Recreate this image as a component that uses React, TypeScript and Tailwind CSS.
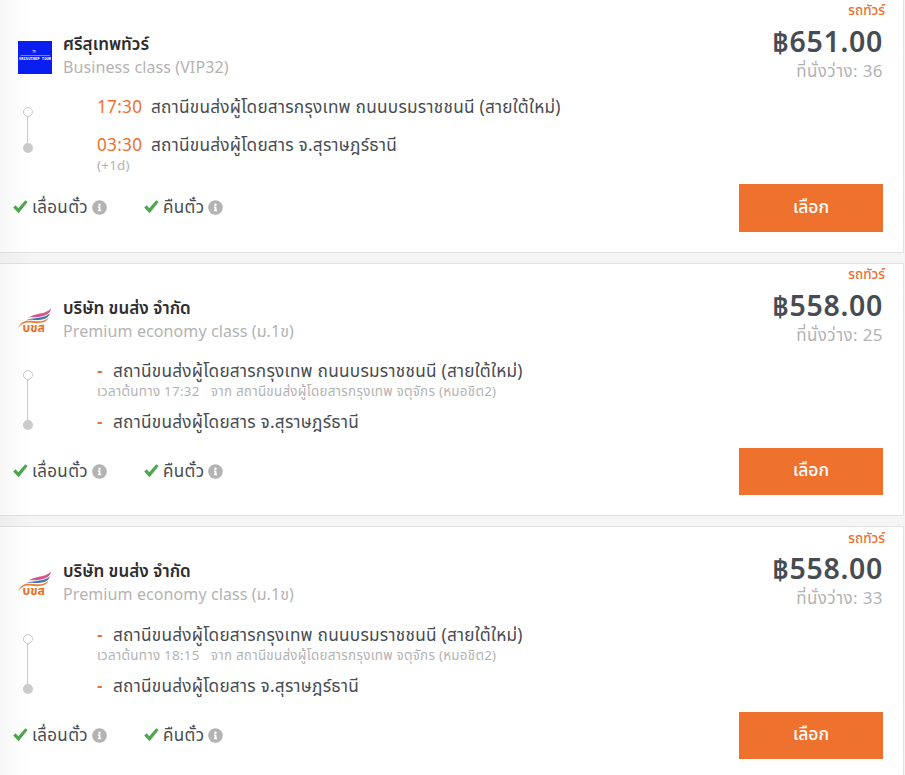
import React from 'react';
import { FaInfoCircle } from 'react-icons/fa';

interface Stop {
  time: string;
  name: string;
  note?: string;
}

interface Trip {
  id: number;
  operator: string;
  logo: 'srisuthep' | 'transport';
  seatClass: string;
  price: string;
  seats: number;
  stops: Stop[];
}

const trips: Trip[] = [
  {
    id: 1,
    operator: 'ศรีสุเทพทัวร์',
    logo: 'srisuthep',
    seatClass: 'Business class (VIP32)',
    price: '651.00',
    seats: 36,
    stops: [
      { time: '17:30', name: 'สถานีขนส่งผู้โดยสารกรุงเทพ ถนนบรมราชชนนี (สายใต้ใหม่)' },
      { time: '03:30', name: 'สถานีขนส่งผู้โดยสาร จ.สุราษฎร์ธานี', note: '(+1d)' },
    ],
  },
  {
    id: 2,
    operator: 'บริษัท ขนส่ง จำกัด',
    logo: 'transport',
    seatClass: 'Premium economy class (ม.1ข)',
    price: '558.00',
    seats: 25,
    stops: [
      {
        time: '-',
        name: 'สถานีขนส่งผู้โดยสารกรุงเทพ ถนนบรมราชชนนี (สายใต้ใหม่)',
        note: 'เวลาต้นทาง 17:32 \u00a0 จาก สถานีขนส่งผู้โดยสารกรุงเทพ จตุจักร (หมอชิต2)',
      },
      { time: '-', name: 'สถานีขนส่งผู้โดยสาร จ.สุราษฎร์ธานี' },
    ],
  },
  {
    id: 3,
    operator: 'บริษัท ขนส่ง จำกัด',
    logo: 'transport',
    seatClass: 'Premium economy class (ม.1ข)',
    price: '558.00',
    seats: 33,
    stops: [
      {
        time: '-',
        name: 'สถานีขนส่งผู้โดยสารกรุงเทพ ถนนบรมราชชนนี (สายใต้ใหม่)',
        note: 'เวลาต้นทาง 18:15 \u00a0 จาก สถานีขนส่งผู้โดยสารกรุงเทพ จตุจักร (หมอชิต2)',
      },
      { time: '-', name: 'สถานีขนส่งผู้โดยสาร จ.สุราษฎร์ธานี' },
    ],
  },
];

const OperatorLogo: React.FC<{ kind: Trip['logo'] }> = ({ kind }) => {
  if (kind === 'srisuthep') {
    return (
      <svg width="34" height="33" viewBox="0 0 34 33" className="mt-[8px] shrink-0">
        <rect width="34" height="33" fill="#0a1ef0" />
        <path d="M14.500 9.500h3M15 11.500l1-1.200 1 1.200 1-1.200" stroke="#c8ccff" strokeWidth="0.800" fill="none" />
        <path d="M2.500 14.500h29.500" stroke="#8f98ff" strokeWidth="0.800" />
        <text x="1" y="19" fontSize="4" fontWeight="700" fill="#ffffff" textLength="32" lengthAdjust="spacingAndGlyphs" fontFamily="DejaVu Sans Mono, monospace">
          SRISUTHEP TOUR
        </text>
      </svg>
    );
  }
  return (
    <svg width="34" height="33" viewBox="0 0 34 33" className="mt-[8px] shrink-0">
      <path d="M11 12.500C17 7.500 27 10 33 3.500 32 10 26 12 20 12.300 16.500 12.300 14 12 11 12.500Z" fill="#d2558f" />
      <path d="M8 15.500C15 10.500 26 14.500 32 8 30.500 14.500 22 15.500 16 15 12.500 14.700 10 14.800 8 15.500Z" fill="#3f78a8" />
      <path d="M10 14.200C17 12 26 13.500 32.300 7.200" stroke="#ffffff" strokeWidth="0.700" fill="none" />
      <path d="M0.300 23.500C2.500 15.500 9 15.500 15 16 21 16.700 27 16.500 30.500 12.500 28.500 18 21 18.800 14 17.800 7 17 3 18.700 0.300 23.500Z" fill="#ee7a33" />
      <text x="4.500" y="27" fontSize="13" fontWeight="700" fill="#e9702a" textLength="22.500" lengthAdjust="spacingAndGlyphs" fontFamily="Noto Sans Thai, Noto Sans, sans-serif">
        บขส
      </text>
    </svg>
  );
};

const CheckMark: React.FC = () => (
  <svg width="15" height="14" viewBox="0 0 15 14" className="shrink-0" fill="#4ca64c">
    <path d="M0.200 7.600 2.600 5.300 5.300 8.200 12.300 0.300 14.600 2.100 5.600 13.200Z" />
  </svg>
);

const Perk: React.FC<{ label: string; width: string }> = ({ label, width }) => (
  <div className={`flex items-center ${width}`}>
    <CheckMark />
    <span className="ml-1 text-[17px] tracking-[0.35px] whitespace-nowrap text-[#474c52]">{label}</span>
    <FaInfoCircle size={15} className="ml-1 shrink-0 text-[#b3b3b3]" />
  </div>
);

const TripCard: React.FC<{ trip: Trip }> = ({ trip }) => {
  const hasOrigin = Boolean(trip.stops[0].note);
  const isLast = trip.id === trips.length;

  return (
    <article
      className={`flex w-[904px] justify-between border border-l-0 border-[#e1e2e6] bg-white ${hasOrigin ? 'h-[253px]' : 'h-[254px]'}`}
    >
      <div className="flex w-[620px] flex-col">
        <header className={`flex shrink-0 items-start pt-[33px] pl-[18px] ${isLast ? 'h-[91px]' : 'h-[90px]'}`}>
          <OperatorLogo kind={trip.logo} />
          <div className="-mt-px ml-[11px] flex flex-col whitespace-nowrap">
            <h3 className="h-6 text-[17px] leading-[23px] font-semibold text-[#2d2d2d]">{trip.operator}</h3>
            <p className="h-[23px] text-[16px] leading-[23px] tracking-[0.1px] text-[#b3b3b3]">{trip.seatClass}</p>
          </div>
        </header>

        <div className="flex h-[92px] shrink-0">
          <div className={`flex w-[56px] shrink-0 flex-col items-center ${hasOrigin ? 'pt-[16px]' : 'pt-[17px]'}`}>
            <span className="size-[10px] shrink-0 rounded-full border border-[#cbcbcb] bg-white" />
            <span className={`-ml-px w-px bg-[#cbcbcb] ${hasOrigin ? 'h-[40px]' : 'h-[26px]'}`} />
            <span className="size-[10px] shrink-0 rounded-full bg-[#cbcbcb]" />
          </div>
          <div className={`ml-[41px] flex flex-col pt-[5px] whitespace-nowrap ${hasOrigin ? 'gap-[11px]' : 'gap-[14px]'}`}>
            {trip.stops.map((stop) => (
              <div key={stop.name}>
                <div className="flex h-6 items-center text-[17.2px] tracking-[0.26px]">
                  <span className={`shrink-0 text-[#ed712e] ${stop.time === '-' ? 'w-[16px] font-semibold' : 'w-[54px]'}`}>{stop.time}</span>
                  <span className="text-[#474c52]">{stop.name}</span>
                </div>
                {stop.note && <p className="h-4 text-[13.4px] leading-4 tracking-[0.26px] text-[#b3b3b3]">{stop.note}</p>}
              </div>
            ))}
          </div>
        </div>

        <footer className="flex h-[50px] shrink-0 items-center pl-[13px]">
          <Perk label="เลื่อนตั๋ว" width="w-[131px]" />
          <Perk label="คืนตั๋ว" width="w-[100px]" />
        </footer>
      </div>

      <div className="flex w-[200px] flex-col items-end pr-[20px] whitespace-nowrap">
        <span className={`-mr-[2px] h-[21px] text-[13.5px] font-medium text-[#ed712e] ${isLast ? 'leading-[23px]' : 'leading-[21px]'}`}>
          รถทัวร์
        </span>
        <span className="h-[40px] text-[28.5px] leading-[40px] font-semibold tracking-[0.7px] text-[#474c52]">฿{trip.price}</span>
        <span className="h-[21px] text-[17px] leading-[19px] tracking-[0.4px] text-[#b3b3b3]">ที่นั่งว่าง: {trip.seats}</span>
        <button
          className={`w-[144px] bg-[#ee712e] pb-[4px] text-[17.5px] font-medium text-white ${hasOrigin ? 'h-[47px]' : 'h-[48px]'} ${isLast ? 'mt-[103px]' : 'mt-[102px]'}`}
        >
          เลือก
        </button>
      </div>
    </article>
  );
};

const App: React.FC = () => {
  return (
    <main className="relative h-[775px] w-[905px] overflow-hidden bg-[#f5f5f5] font-['Noto_Sans','Noto_Sans_Thai',sans-serif]">
      <div className="-mt-px flex flex-col gap-[10px]">
        {trips.map((trip) => (
          <TripCard key={trip.id} trip={trip} />
        ))}
      </div>
      {/* soft shade along the left edge */}
      <div className="pointer-events-none absolute inset-y-0 left-0 w-8 bg-linear-to-r from-black/3 to-transparent" />
    </main>
  );
};

export default App;
